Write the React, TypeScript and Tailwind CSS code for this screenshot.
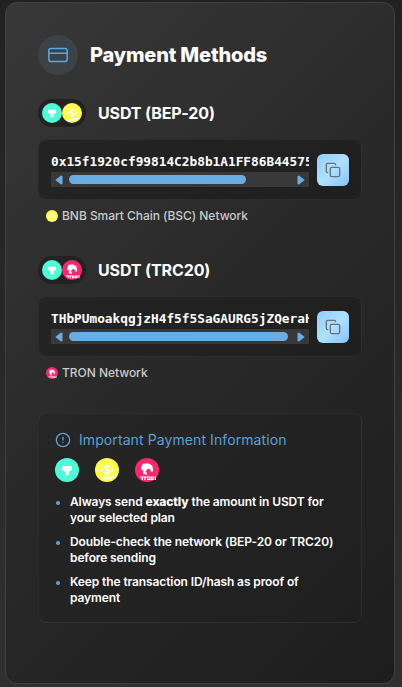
import React from "react";
import { CreditCard, Copy, CircleAlert } from "lucide-react";

function Tether({ className }: { className: string }) {
  return (
    <svg viewBox="0 0 24 24" className={className}>
      <circle cx="12" cy="12" r="12" fill="#4dfbd6" />
      <path d="M7.2 8h9.6v2h.2v2.4h-2v1.2h-1.2v3.6h-3.6v-3.6H9v-1.2H7V10h.2z" fill="#fff" />
    </svg>
  );
}

function Bnb({ className }: { className: string }) {
  return (
    <svg viewBox="0 0 24 24" className={className}>
      <circle cx="12" cy="12" r="12" fill="#fffa4d" />
      <path d="M14.5 9.4 12 7.6l-2.3 2.2 4.6 4.2-2.3 2.2-2.6-1.9" fill="none" stroke="#fff" strokeWidth="2" />
      <path d="M6.8 10.2 8.7 12l-1.9 1.9L5 12zM17.2 10.2 19 12l-1.8 1.9-1.9-1.9z" fill="#fff" />
      <path d="M8 21.5v-2m2 2V19.2h2v2.3m2 0v-2.3h2v2.3m1-3h4m-2 0v2.3" stroke="#fff" strokeWidth="1.3" fill="none" />
    </svg>
  );
}

function Tron({ className }: { className: string }) {
  return (
    <svg viewBox="0 0 24 24" className={className}>
      <circle cx="12" cy="12" r="12" fill="#ff256f" />
      <path d="M6 9.5 8 5.8l5-.6 4.2 2.3 1 4.8-1 2-1.5-1-1-2.6-2.2.4-1.7 2.2 1.4 3.2-1.2.6-1.4-1.6-.4 1.3H8.3l-.2-4.4-2-.6z" fill="#fff" />
      <path d="M5.3 19h4m-2 0v3m2.6 0v-3h2m.7 0h2v2.5h-2zm3.5 0h2v2.5h-2zm4.2-1v4" stroke="#fff" strokeWidth="1.2" fill="none" />
    </svg>
  );
}

interface WalletProps {
  title: string;
  address: string;
  network: string;
  thumb: string;
  Coin: React.ComponentType<{ className: string }>;
}

function Wallet({ title, address, network, thumb, Coin }: WalletProps) {
  return (
    <section className="h-[157px]">
      <div className="flex h-7 items-center gap-3">
        <div className="flex h-7 w-12 items-center justify-center rounded-full bg-[#222222]">
          <Tether className="size-5" />
          <Coin className="size-5" />
        </div>
        <h3 className="text-[16px] leading-7 font-bold tracking-[-0.12px]">{title}</h3>
      </div>
      <div className="mt-3 flex h-[61px] items-center justify-between rounded-lg border border-white/5 bg-[linear-gradient(135deg,#242424,#1f1f1f)] px-3">
        <div className="w-[258px] overflow-hidden pt-[1px]">
          <div className="h-[18px] overflow-hidden font-['DejaVu_Sans_Mono',monospace] text-[12.79px] leading-[18px] font-bold whitespace-nowrap">
            {address}
          </div>
          <div className="mt-[1px] flex h-[15px] items-center bg-[#383838] px-1">
            <svg viewBox="0 0 8 10" className="h-[10px] w-2 shrink-0">
              <path d="M.3 5 6 .5 7.5 1v8L6 9.5z" fill="#69ade1" />
            </svg>
            <div className="ml-1.5 flex-1">
              <div className={`h-[9px] rounded-full bg-[#69ade1] ${thumb}`} />
            </div>
            <svg viewBox="0 0 8 10" className="h-[10px] w-2 shrink-0">
              <path d="M7.7 5 2 .5.5 1v8L2 9.5z" fill="#69ade1" />
            </svg>
          </div>
        </div>
        <button aria-label="Copy address" className="flex size-8 items-center justify-center rounded-md bg-[linear-gradient(135deg,#91cbff_0%,#afe1ff_50%,#86c3f8_100%)] text-[#68727a]">
          <Copy size={16} strokeWidth={2} />
        </button>
      </div>
      <div className="mt-[7px] flex h-[18px] items-center gap-1 pl-2 text-[12px] leading-[18px] font-medium tracking-[-0.04px] text-[#cacaca]">
        <Coin className="size-3" />
        <span>{network}</span>
      </div>
    </section>
  );
}

export default function App() {
  return (
    <main className="h-[687px] overflow-hidden bg-[linear-gradient(180deg,#212121,#303030)] pt-[2px] pr-[7px] pl-[5px] font-['Inter',sans-serif] text-white">
      <div className="h-[682px] rounded-xl border border-[#414141] bg-[linear-gradient(135deg,#383838_0%,#2a2a2a_45%,#1d1d1d_100%)] px-8 pt-8">
        <header className="flex h-10 items-center gap-3">
          <div className="flex size-10 items-center justify-center rounded-full bg-[#3c4247] text-[#62a6dc]">
            <CreditCard size={22} strokeWidth={1.6} />
          </div>
          <h2 className="text-[20px] leading-7 font-extrabold tracking-[-0.17px]">Payment Methods</h2>
        </header>
        <div className="mt-6">
          <Wallet title="USDT (BEP-20)" address="0x15f1920cf99814C2b8b1A1FF86B44575" network="BNB Smart Chain (BSC) Network" thumb="w-[177px]" Coin={Bnb} />
          <Wallet title="USDT (TRC20)" address="THbPUmoakqgjzH4f5f5SaGAURG5jZQeraH" network="TRON Network" thumb="w-[219px]" Coin={Tron} />
        </div>
        <section className="h-[210px] rounded-lg border border-white/5 bg-[linear-gradient(135deg,#262626,#1f1f1f)] px-4 pt-4">
          <div className="flex h-5 items-center gap-2 text-[#5c9fd3]">
            <CircleAlert size={16} strokeWidth={2} />
            <h4 className="text-[14px] leading-5 tracking-[0.09px]">Important Payment Information</h4>
          </div>
          <div className="mt-2 flex gap-4">
            <Tether className="size-6" />
            <Bnb className="size-6" />
            <Tron className="size-6" />
          </div>
          <ul className="mt-3 flex flex-col gap-2 text-[12px] leading-4 font-semibold tracking-[-0.11px]">
            {[
              <>Always send <strong className="font-extrabold">exactly</strong> the amount in USDT for<br />your selected plan</>,
              <>Double-check the network (BEP-20 or TRC20)<br />before sending</>,
              <>Keep the transaction ID/hash as proof of<br />payment</>,
            ].map((item, i) => (
              <li key={i} className="flex gap-[10px] pl-[1px]">
                <span className="mt-[6.5px] size-1 shrink-0 rounded-full bg-[#62a6dc]" />
                <span className="whitespace-nowrap">{item}</span>
              </li>
            ))}
          </ul>
        </section>
      </div>
    </main>
  );
}
